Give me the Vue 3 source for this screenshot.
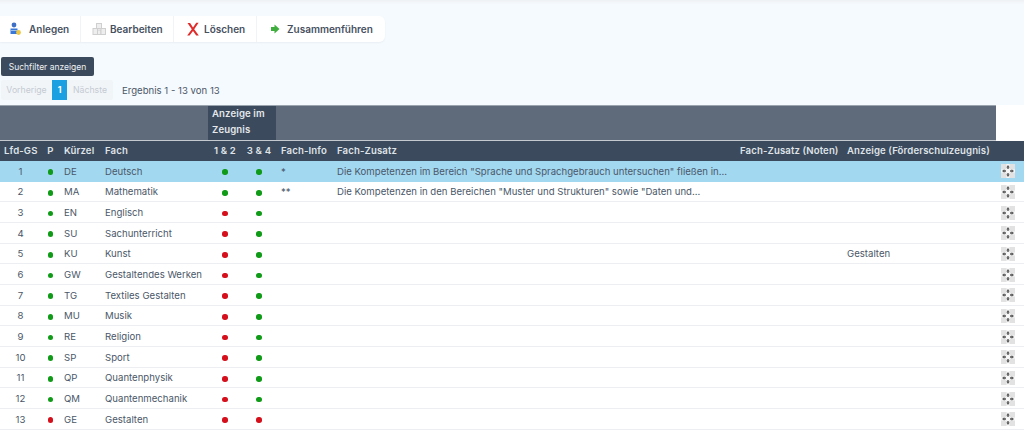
<script setup>
const rows = [
  [1,'g','DE','Deutsch','g','g','*','Die Kompetenzen im Bereich "Sprache und Sprachgebrauch untersuchen" fließen in...',''],
  [2,'g','MA','Mathematik','g','g','**','Die Kompetenzen in den Bereichen "Muster und Strukturen" sowie "Daten und...',''],
  [3,'g','EN','Englisch','r','g','','',''],
  [4,'g','SU','Sachunterricht','r','g','','',''],
  [5,'g','KU','Kunst','r','g','','','Gestalten'],
  [6,'g','GW','Gestaltendes Werken','r','g','','',''],
  [7,'g','TG','Textiles Gestalten','r','g','','',''],
  [8,'g','MU','Musik','r','g','','',''],
  [9,'g','RE','Religion','r','g','','',''],
  [10,'g','SP','Sport','r','g','','',''],
  [11,'g','QP','Quantenphysik','r','g','','',''],
  [12,'g','QM','Quantenmechanik','r','g','','',''],
  [13,'r','GE','Gestalten','r','r','','','']
]
const widths = [41,19,41,107,34,34,57,403,107,153,28]
</script>

<template>
  <div class="page">
    <div class="top">
      <div class="toolbar">
        <button class="tool t1">
          <svg width="14" height="14" viewBox="0 0 14 14"><circle cx="6" cy="3" r="2.4" fill="#3f6fc4"/><path d="M2.5 6.5h7v5.5h-7z" fill="#3a78d8"/><path d="M3 8.5h6" stroke="#9cc0ee"/><circle cx="10.5" cy="10.5" r="2.4" fill="#eec643"/></svg>
          <span>Anlegen</span>
        </button>
        <button class="tool t2">
          <svg width="14" height="14" viewBox="0 0 14 14" fill="#eeeeee" stroke="#cfcfcf" stroke-width="1"><rect x="4.5" y="1.5" width="5" height="5"/><rect x="1" y="6.5" width="4.5" height="6"/><rect x="5.5" y="8" width="3.5" height="4.5"/><rect x="9" y="6.5" width="4.5" height="6"/></svg>
          <span>Bearbeiten</span>
        </button>
        <button class="tool t3">
          <svg width="14" height="14" viewBox="0 0 14 14"><path d="M1.5 1h2.6L7 5.4 10.2 .8 12.6 .8 8.2 7.2 12.8 13.4H10.2L7 9 3.6 13.4H1.2L5.8 7.2z" fill="#e02b2b"/></svg>
          <span>Löschen</span>
        </button>
        <button class="tool t4">
          <svg width="14" height="14" viewBox="0 0 14 14"><path d="M3 5h3.5V2.5L11.5 7l-5 4.5V9H3z" fill="#3fae3f"/></svg>
          <span>Zusammenführen</span>
        </button>
      </div>
      <button class="filter">Suchfilter anzeigen</button>
      <div class="pager-line">
        <div class="pager">
          <span class="pg prev">Vorherige</span>
          <span class="pg current">1</span>
          <span class="pg">Nächste</span>
        </div>
        <span class="result">Ergebnis 1 - 13 von 13</span>
      </div>
    </div>
    <table>
      <colgroup>
        <col v-for="(w, i) in widths" :key="i" :style="{ width: w + 'px' }" />
      </colgroup>
      <thead>
        <tr class="h1">
          <th colspan="4"></th>
          <th colspan="2" class="group">Anzeige im Zeugnis</th>
          <th colspan="4"></th>
          <th class="blank"></th>
        </tr>
        <tr class="h2">
          <th class="c">Lfd-GS</th>
          <th class="c">P</th>
          <th>Kürzel</th>
          <th>Fach</th>
          <th class="c">1 &amp; 2</th>
          <th class="c">3 &amp; 4</th>
          <th class="info">Fach-Info</th>
          <th>Fach-Zusatz</th>
          <th>Fach-Zusatz (Noten)</th>
          <th>Anzeige (Förderschulzeugnis)</th>
          <th></th>
        </tr>
      </thead>
      <tbody>
        <tr v-for="(r, i) in rows" :key="r[0]" :class="{ sel: i === 0 }">
          <td class="c">{{ r[0] }}</td>
          <td class="c"><i class="dot" :class="r[1]"></i></td>
          <td>{{ r[2] }}</td>
          <td>{{ r[3] }}</td>
          <td class="c"><i class="dot" :class="r[4]"></i></td>
          <td class="c"><i class="dot" :class="r[5]"></i></td>
          <td class="info">{{ r[6] }}</td>
          <td>{{ r[7] }}</td>
          <td></td>
          <td>{{ r[8] }}</td>
          <td class="c">
            <svg class="move" width="14" height="14" viewBox="0 0 14 14">
              <rect width="14" height="14" fill="#e2e2e2"/>
              <path d="M5.5 0h3v14h-3zM0 5.5h14v3H0z" fill="#f8f8f8"/>
              <path d="M7 1 8.7 3.4H7.7V5H6.3V3.4H5.3zM7 13 5.3 10.6H6.3V9H7.7V10.6H8.7zM1 7 3.4 5.3V6.3H5V7.7H3.4V8.7zM13 7 10.6 8.7V7.7H9V6.3H10.6V5.3z" fill="#555"/>
            </svg>
          </td>
        </tr>
      </tbody>
    </table>
  </div>
</template>

<style>
html, body { margin: 0; background: #fff; }
</style>

<style scoped>
.page {
  width: 1024px;
  height: 435px;
  overflow: hidden;
  background: #fff;
  font-family: Inter, "Liberation Sans", sans-serif;
  color: #4a5768;
  font-size: 9.6px;
}
.top {
  background: #f5fafe;
  height: 105px;
  box-sizing: border-box;
  padding-top: 16px;
  box-shadow: inset 0 4px 3px -2px #eef0f3;
}
.toolbar {
  display: flex;
  width: 385px;
  height: 26px;
  background: #fff;
  border-radius: 0 6px 6px 0;
  box-shadow: 0 1px 2px rgba(30, 50, 80, .06);
}
.tool {
  display: flex;
  align-items: center;
  border: 0;
  background: none;
  padding: 0;
  font: 600 10px Inter, "Liberation Sans", sans-serif;
  color: #47515f;
  border-right: 1px solid #f1f4f7;
  box-sizing: border-box;
}
.t1 { width: 81px; padding-left: 8px; gap: 7px; }
.t2 { width: 93px; padding-left: 11px; gap: 4px; }
.t3 { width: 83px; padding-left: 12px; gap: 4px; }
.t4 { flex: 1; padding-left: 11px; gap: 5px; border-right: 0; }
.filter {
  display: block;
  margin: 15px 0 0 1px;
  width: 93px;
  height: 19px;
  border: 0;
  padding: 0;
  border-radius: 2px;
  background: #3b4a5c;
  color: #eef1f4;
  font: 400 8.5px Inter, "Liberation Sans", sans-serif;
}
.pager-line {
  display: flex;
  align-items: center;
  margin: 4px 0 0 1px;
  height: 20px;
}
.pager {
  display: flex;
  height: 20px;
  width: 112px;
  background: #f2f5f8;
  border-radius: 2px;
}
.pg {
  display: flex;
  align-items: center;
  justify-content: center;
  color: #c4cbd3;
  font-size: 8.7px;
  flex: 1;
}
.pg.prev { flex: 0 0 51px; }
.pg.current {
  flex: 0 0 15px;
  background: #1ba1e2;
  color: #fff;
  font-weight: 700;
}
.result { margin-left: 9px; color: #4a5768; }
table {
  border-collapse: collapse;
  table-layout: fixed;
  width: 1024px;
}
th {
  padding: 0 4px;
  text-align: left;
  font-weight: 600;
  white-space: nowrap;
  letter-spacing: .12px;
}
.h1 th {
  height: 35px;
  background: #5f6b7a;
  border-top: 1px solid #9aa4af;
  border-bottom: 1px solid #c4c9cf;
  box-sizing: border-box;
}
.h1 .group {
  background: #3b4a5c;
  color: #e4e8ec;
  white-space: normal;
  line-height: 16px;
  padding: 0 4px;
  vertical-align: top;
}
.h1 .blank { background: #fff; border: 0; }
.h2 th {
  height: 20px;
  background: #3b4a5c;
  color: #dfe3e8;
  box-sizing: border-box;
  overflow: visible;
}
td {
  height: 20.67px;
  padding: 1px 4px 0;
  box-sizing: border-box;
  border-bottom: 1px solid #eceef1;
  white-space: nowrap;
  overflow: visible;
  background: #fff;
}
td.info { padding-left: 5px; }
th.info { padding-left: 5px; }
tr.sel td { background: #a3d8f1; border-bottom-color: #a3d8f1; }
.c { text-align: center; }
.dot {
  display: inline-block;
  width: 5.5px;
  height: 5.5px;
  border-radius: 50%;
  vertical-align: middle;
}
.dot.g { background: #0f9b17; }
.dot.r { background: #d50f1b; }
.move { display: block; margin: 0 auto; position: relative; left: -2px; }
</style>
